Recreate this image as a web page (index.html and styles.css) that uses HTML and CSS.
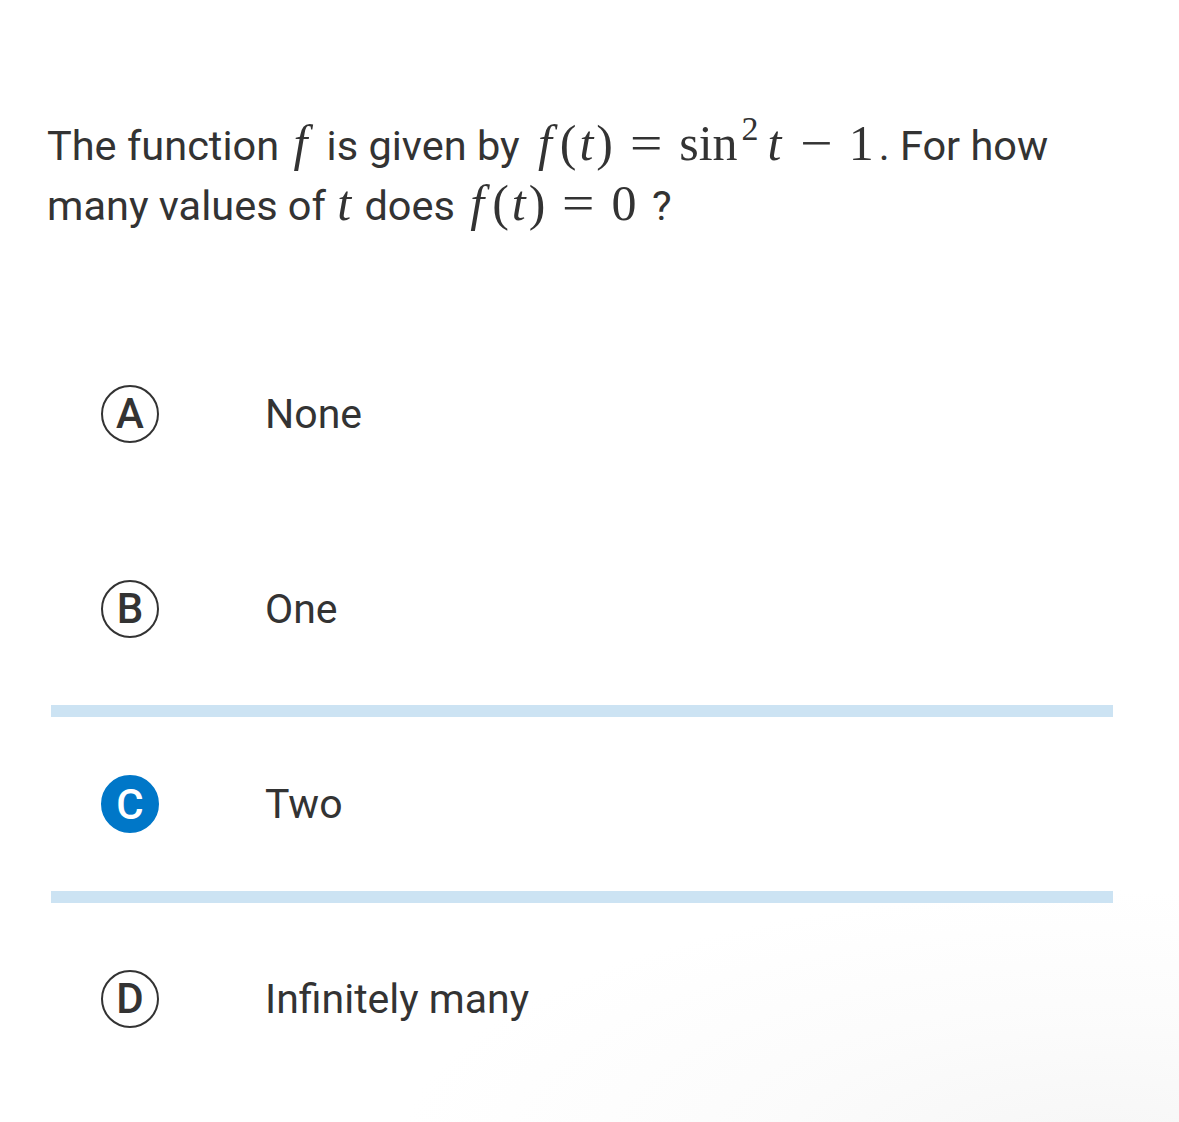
FILE: index.html
```html
<!DOCTYPE html>
<html lang="en">
<head>
<meta charset="utf-8">
<link rel="stylesheet" href="styles.css">
</head>
<body>
<div class="page">
  <p class="question">The function <span class="m solo-f"><i>f</i></span> is given by <span class="m wide"><i class="f">f</i>(<i class="t">t</i>)<span class="rel">=</span>sin<sup>2</sup><i class="t t2">t</i><span class="bin">−</span>1</span>. For how many values of <span class="m solo-t"><i>t</i></span> does <span class="m"><i class="f">f</i>(<i class="t">t</i>)<span class="rel">=</span>0</span> ?</p>
  <ul class="options">
    <li class="option"><span class="badge">A</span><span class="label">None</span></li>
    <li class="option"><span class="badge">B</span><span class="label">One</span></li>
    <li class="option selected"><span class="badge">C</span><span class="label">Two</span></li>
    <li class="option"><span class="badge">D</span><span class="label">Infinitely many</span></li>
  </ul>
</div>
</body>
</html>
```
FILE: styles.css
```css
html, body {
  margin: 0;
  padding: 0;
  background: #fff;
}
body {
  font-family: Roboto, "Liberation Sans", sans-serif;
  color: #333;
  min-height: 1122px;
  background:
    radial-gradient(ellipse 700px 260px at 1100px 1150px, #f6f6f6 0%, rgba(250,250,250,0.7) 50%, rgba(255,255,255,0) 100%),
    #fff;
}
.page {
  padding: 116px 0 0 0;
}
.question {
  margin: 0 0 0 47px;
  width: 1060px;
  font-size: 41.5px;
  line-height: 60px;
}
.m {
  font-family: "Liberation Serif", "DejaVu Serif", serif;
  font-size: 50px;
  line-height: 1;
  white-space: nowrap;
  margin: 0 5px;
}
.m.wide {
  margin-left: 8px;
}
.m.solo-f {
  margin: 0 9px 0 4px;
}
.m.solo-t {
  margin: 0 3px 0 1px;
}
.m i {
  font-style: italic;
}
.m .f {
  margin-right: 8px;
}
.m .t {
  margin: 0 3px;
}
.m sup {
  font-size: 34px;
  line-height: 0;
  vertical-align: 20px;
  margin-left: 4px;
}
.m .t2 {
  margin-left: 9px;
}
.rel {
  margin: 0 19px;
  display: inline-block;
  transform: scaleX(1.15);
}
.bin {
  margin: 0 18px;
  display: inline-block;
  transform: scaleX(1.15);
}
.options {
  list-style: none;
  margin: 80px 0 0 51px;
  padding: 0;
  width: 1062px;
}
.option {
  box-sizing: border-box;
  height: 195px;
  display: flex;
  align-items: center;
  padding-left: 50px;
  border-top: 12px solid transparent;
  border-bottom: 12px solid transparent;
}
.option.selected {
  height: 198px;
  margin: -1px 0 -2px;
  border-color: #cce3f3;
}
.badge {
  box-sizing: border-box;
  width: 58px;
  height: 58px;
  border-radius: 50%;
  border: 2px solid #333;
  display: flex;
  align-items: center;
  justify-content: center;
  font-size: 42px;
  font-weight: 500;
  color: #333;
  flex: none;
}
.selected .badge {
  background: #0077c8;
  border-color: #0077c8;
  color: #fff;
}
.label {
  margin-left: 106px;
  font-size: 41px;
}
```
